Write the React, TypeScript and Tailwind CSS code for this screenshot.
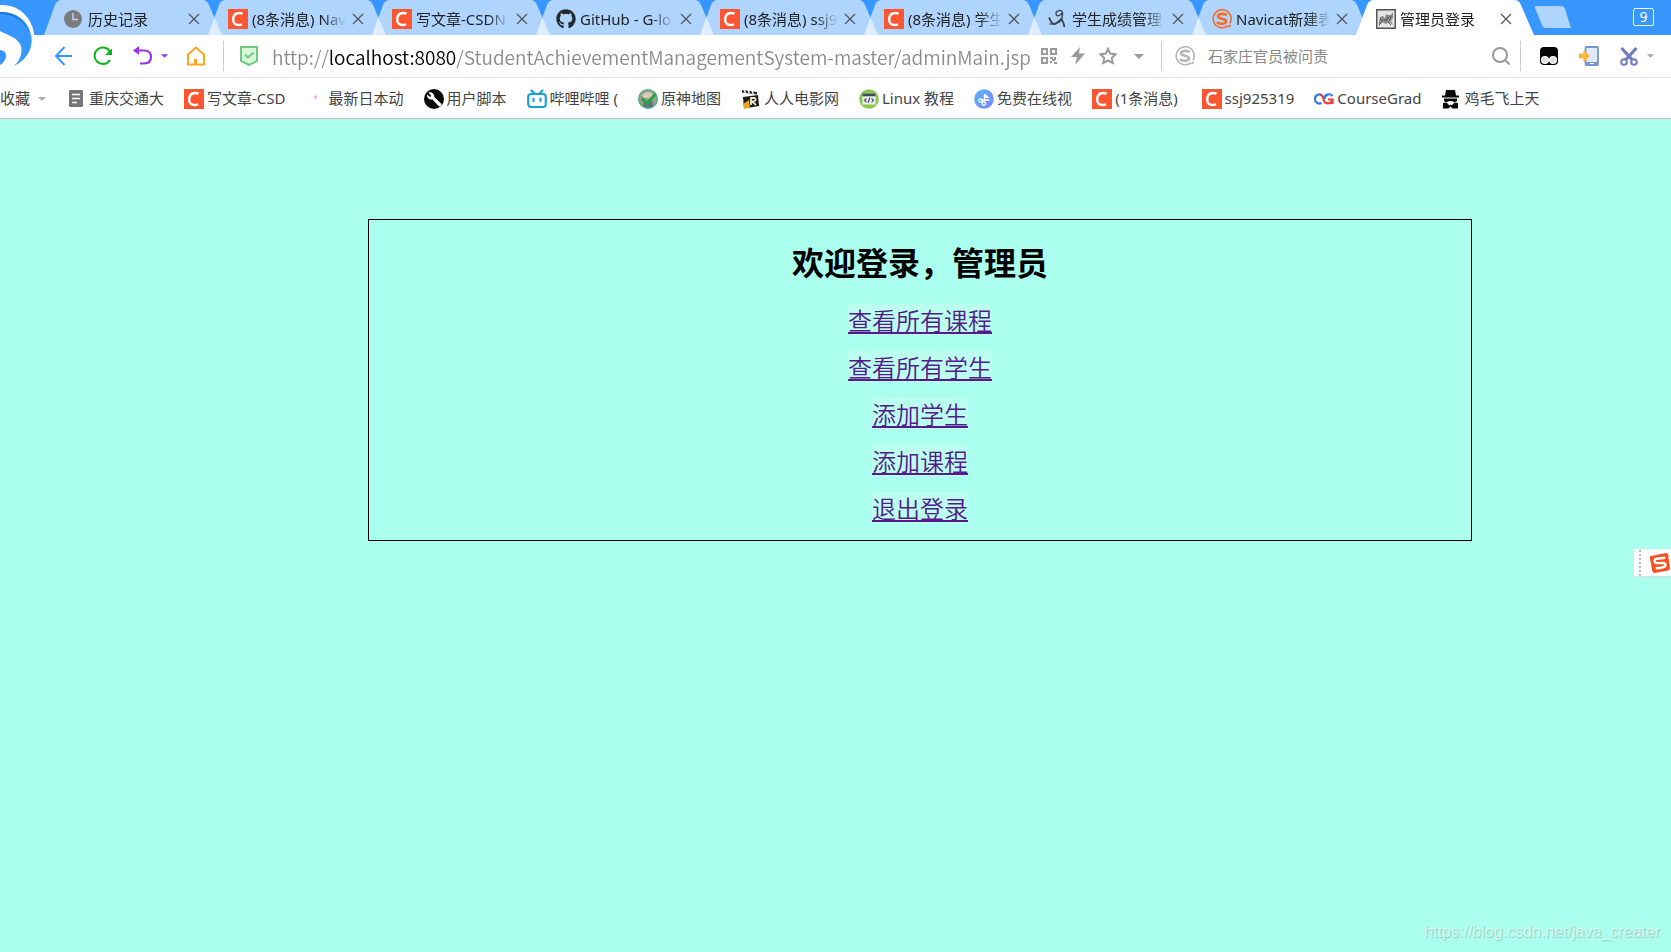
import type { ReactNode } from 'react';
import { FaGithub } from 'react-icons/fa';

const Csdn = () => (
    <svg viewBox="0 0 20 20" className="size-5 shrink-0">
        <rect width="20" height="20" fill="#fc5531" />
        <path d="M14.6 4.8 Q12.9 3.9 10.9 4 C7.4 4.2 5.3 6.8 5.2 10.3 C5.1 14 7.1 16 10.4 16 Q12.4 16 14 15.2" fill="none" stroke="#fff" strokeWidth="2.4" />
    </svg>
);

const Clock = () => (
    <svg viewBox="0 0 20 20" className="size-5 shrink-0">
        <circle cx="9" cy="10" r="9" fill="#7c7c7c" />
        <path d="M9 4 V10.5 H14" fill="none" stroke="#bbdaff" strokeWidth="1.4" />
    </svg>
);

const Github = () => <FaGithub className="size-5 shrink-0 text-[#24292e]" />;

const Scribble = () => (
    <svg viewBox="0 0 20 20" className="size-5 shrink-0" fill="none" stroke="#3f4650">
        <path d="M14.5 2.5 C12 .5 7.500 2 8 5 C8.500 8 13 7 14.500 3 C15 7 14 10 11 13.500" strokeWidth="1.4" />
        <path d="M1 8.500 C2.500 11 3.500 14.500 5.500 15 C8 15.500 10.500 13 13.500 10 Q15.500 13 16.500 18" strokeWidth="1.900" />
        <path d="M1.500 15 H7" strokeWidth="1.200" />
    </svg>
);

const SogouRing = ({ color }: { color: string }) => (
    <svg viewBox="0 0 20 20" className="size-5 shrink-0" fill="none" stroke={color} strokeLinecap="round">
        <path d="M15.5 17 A9 9 0 1 1 18.200 13.800" strokeWidth="1.6" />
        <path d="M14 5.600 C11 4.300 6 4.600 6 7.300 C6 10.200 14 9.200 14 12.300 C14 15.200 8.500 15.300 5.500 13.900" strokeWidth="2.600" />
        <path d="M17 17.500 L18 16.500" strokeWidth="1.800" />
    </svg>
);

const Cat = () => (
    <svg viewBox="0 0 20 20" className="size-5 shrink-0">
        <rect x=".75" y=".75" width="18.500" height="18.500" fill="#e4e4e4" stroke="#555" strokeWidth="1.5" />
        <path d="M3 13 L4 8 L7 7 L9 9 L10 5 L12 6 L15 6 L17 3 V9 L15 12 L17 16 L13 13 L10 15 L6 13 L3 17 Z" fill="#8b8b8b" />
        <path d="M4 10 L7 12 M8 11 H12 M11 8 L13 9 M15 7 L14 10 M3 16 L6 13 M12 13 L15 16" stroke="#4c4c4c" />
    </svg>
);

const Doc = () => (
    <svg viewBox="0 0 20 20" className="size-5 shrink-0">
        <rect x="3" y="1" width="14" height="17" rx="1" fill="#777" />
        <path d="M6 5.500 H14 M6 9.500 H14 M6 13.500 H11" stroke="#fff" strokeWidth="1.300" />
    </svg>
);

const PinkDot = () => (
    <svg viewBox="0 0 20 20" className="size-5 shrink-0">
        <path d="M8 7.500 L10.500 6 L11 8.500 L9 11 Z" fill="#f3a6e3" />
    </svg>
);

const Wrench = () => (
    <svg viewBox="0 0 20 20" className="size-5 shrink-0">
        <circle cx="10" cy="10" r="10" fill="#0b0b0b" />
        <path d="M3 5.500 L6.200 8 L7.200 6.800 L4.500 3.500 C7 2.500 10.500 4.500 10.300 8 L17.500 15 Q17.500 17.500 15 17.500 L8.500 10.500 C5.500 11.200 2.700 8.800 3 5.500 Z" fill="#fff" />
    </svg>
);

const Bilibili = () => (
    <svg viewBox="0 0 20 20" className="size-5 shrink-0" fill="none" stroke="#1ba1d9" strokeWidth="2.200" strokeLinecap="round">
        <rect x="1.200" y="5" width="17.600" height="13" rx="3" />
        <path d="M4.500 1.500 L7 4 M15.500 1.500 L13 4 M6.500 9.500 V12 M13.500 9.500 V12" />
    </svg>
);

const GenshinMap = () => (
    <svg viewBox="0 0 20 20" className="size-5 shrink-0">
        <circle cx="10" cy="10" r="9.200" fill="#a39a92" stroke="#4fae7c" strokeWidth="1.600" />
        <path d="M4 6 Q10 0 16 6 L14 9 H6 Z" fill="#d5cabb" />
        <path d="M6 12 H14 L15 17 Q10 20 5 17 Z" fill="#646b84" />
        <path d="M4 9.500 L9 14.500 L17.500 5" fill="none" stroke="#26a63f" strokeWidth="3.200" />
    </svg>
);

const Film = () => (
    <svg viewBox="0 0 20 20" className="size-5 shrink-0">
        <path d="M1 1 L16 3 L16 5.500 L1 3.500 Z" fill="#222" />
        <path d="M3 1 L4.500 4 M7 1.500 L8.500 4.500 M11 2 L12.500 5" stroke="#fff" strokeWidth="1.400" />
        <path d="M2 8 L17 6 L18 17 L3 19.500 Z" fill="#1c1a17" />
        <path d="M2 15 L8 11 L9 18.500 L3 19.500 Z" fill="#eda31b" />
        <path d="M10 16 V9 H13 Q15 9.200 14.500 11 Q14 12.500 11 12.500 L15 16" fill="none" stroke="#f4e9cc" strokeWidth="1.800" />
    </svg>
);

const Linux = () => (
    <svg viewBox="0 0 20 20" className="size-5 shrink-0">
        <circle cx="10" cy="10" r="9.800" fill="#8cc550" />
        <rect x="3.500" y="4.500" width="13" height="11" fill="#eef1f2" />
        <rect x="3.500" y="4.500" width="13" height="2.800" fill="#3d4b5a" />
        <path d="M7.500 9.300 L5.500 11.300 L7.500 13.300 M12.500 9.300 L14.500 11.300 L12.500 13.300 M10.800 8.800 L9.200 13.800" fill="none" stroke="#3d4b5a" strokeWidth="1.200" />
    </svg>
);

const VideoCut = () => (
    <svg viewBox="0 0 20 20" className="size-5 shrink-0" fill="none" stroke="#fff">
        <defs>
            <linearGradient id="cut" x1="0" y1="0" x2="1" y2="1">
                <stop offset="0" stopColor="#57b8fb" />
                <stop offset="1" stopColor="#7b84fb" />
            </linearGradient>
        </defs>
        <circle cx="10" cy="10" r="9.800" fill="url(#cut)" stroke="none" />
        <path d="M11 4.500 L15.500 9 H11 Z" fill="#fff" stroke="none" />
        <circle cx="6.500" cy="11.500" r="1.700" strokeWidth="1.300" />
        <circle cx="9.800" cy="14.500" r="1.700" strokeWidth="1.300" />
        <path d="M10.500 5 V13 M8 11 H15.500" strokeWidth="1.300" />
    </svg>
);

const CourseGrad = () => (
    <svg viewBox="0 0 20 20" className="size-5 shrink-0" fill="none" strokeWidth="2.200">
        <path d="M8 6.300 A4.500 4.500 0 1 0 7.500 14" stroke="#2f78e8" />
        <path d="M6 5.700 A4.500 4.500 0 0 1 9.500 10 Q9.800 14.300 14 14.300" stroke="#e9403b" />
        <path d="M18.500 7 A4.500 4.500 0 0 0 10.500 10" stroke="#2f78e8" />
        <path d="M14 10.500 H18.500 V15 M18 12 Q17 14.300 14 14.300" stroke="#e9403b" />
    </svg>
);

const Spy = () => (
    <svg viewBox="0 0 20 20" className="size-5 shrink-0" fill="#0a0a0a">
        <path d="M5 1 H14 L15 6.500 H18 V8.500 H1 V6.500 H4 Z" />
        <path d="M3 9.500 H16 V12 Q14.500 13.800 10.500 12 H8.500 Q4.500 13.800 3 12 Z" />
        <path d="M2 14 L5.500 13.500 L8.500 16.500 L9.500 15.500 L10.500 16.500 L13.500 13.500 L17 14 V19.500 H11.500 L9.500 17.500 L7.500 19.500 H2 Z" />
    </svg>
);

const Caret = ({ className }: { className: string }) => (
    <svg viewBox="0 0 8 4" className={className} fill="currentColor">
        <path d="M0 0 H8 L4 4 Z" />
    </svg>
);

const Logo = () => (
    <svg viewBox="0 0 36 70" className="pointer-events-none absolute top-0 left-0 z-20 h-[70px] w-9">
        <path d="M0 5 C18 4 33 17 34.500 37 L34 45 L0 69 Z" fill="#fff" />
        <path d="M0 12 C15 11 29 20 31.500 37 C33 50 26 60 14 66 C21 60 23 50 20.500 45 C17 37 5 34 0 31 Z" fill="#3797ff" />
        <path d="M0 12 C12 11 26 20 29 32 C23 20 12 14 0 14 Z" fill="#2278dd" />
        <path d="M0 50 C4 50 6.500 53 6 57 Q5 62 0 65 Z" fill="#3797ff" />
    </svg>
);

type Tab = { id: number; title: string; icon: ReactNode; active?: boolean };

const tabs: Tab[] = [
    { id: 1, title: '历史记录', icon: <Clock /> },
    { id: 2, title: '(8条消息) Nav', icon: <Csdn /> },
    { id: 3, title: '写文章-CSDN', icon: <Csdn /> },
    { id: 4, title: 'GitHub - G-lo', icon: <Github /> },
    { id: 5, title: '(8条消息) ssj9', icon: <Csdn /> },
    { id: 6, title: '(8条消息) 学生', icon: <Csdn /> },
    { id: 7, title: '学生成绩管理', icon: <Scribble /> },
    { id: 8, title: 'Navicat新建表', icon: <SogouRing color="#fb6a22" /> },
    { id: 9, title: '管理员登录', icon: <Cat />, active: true },
];

const bookmarks = [
    { id: 1, title: '重庆交通大', icon: <Doc /> },
    { id: 2, title: '写文章-CSD', icon: <Csdn /> },
    { id: 3, title: '最新日本动', icon: <PinkDot /> },
    { id: 4, title: '用户脚本', icon: <Wrench /> },
    { id: 5, title: '哔哩哔哩 (', icon: <Bilibili /> },
    { id: 6, title: '原神地图', icon: <GenshinMap /> },
    { id: 7, title: '人人电影网', icon: <Film /> },
    { id: 8, title: 'Linux 教程', icon: <Linux /> },
    { id: 9, title: '免费在线视', icon: <VideoCut /> },
    { id: 10, title: '(1条消息) ', icon: <Csdn /> },
    { id: 11, title: 'ssj925319', icon: <Csdn /> },
    { id: 12, title: 'CourseGrad', icon: <CourseGrad /> },
    { id: 13, title: '鸡毛飞上天', icon: <Spy /> },
];

const menu = ['查看所有课程', '查看所有学生', '添加学生', '添加课程', '退出登录'];

function TabBar() {
    return (
        <div className="flex h-[35px] bg-[#3797ff] pl-11">
            {tabs.map((tab) => (
                <div key={tab.id} className="relative -mr-[14px] flex h-[35px] w-[178px] shrink-0 items-center pt-[3px] pr-[22px] pl-5">
                    <svg viewBox="0 0 178 35" className="absolute inset-0 h-full w-full">
                        <path d="M0 35 L11 5 Q13 0 18 0 H158 Q163 0 165 5 L178 35 Z" fill="#fff" fillOpacity={tab.active ? 1 : 0.6} />
                    </svg>
                    <button className="relative flex w-[120px] shrink-0 items-center gap-1 text-[15px] leading-5 whitespace-nowrap text-[#222] [mask-image:linear-gradient(to_right,#000_96px,transparent_118px)]">
                        {tab.icon}
                        {tab.title}
                    </button>
                    <button aria-label="关闭标签" className="relative ml-1 text-[#555]">
                        <svg viewBox="0 0 12 12" className="size-3" stroke="currentColor" strokeWidth="1.300">
                            <path d="M1 1 L11 11 M11 1 L1 11" />
                        </svg>
                    </button>
                </div>
            ))}
            <button aria-label="新建标签" className="ml-[14px] shrink-0 self-start pt-[6px]">
                <svg viewBox="0 0 37 22" className="h-[22px] w-[37px]">
                    <path d="M3 0 H27 Q30 0 31 3 L37 22 H12 Q9 22 8 19 L1 2 Q0 0 3 0 Z" fill="#afd5ff" />
                </svg>
            </button>
            <button className="mt-2 mr-[17px] ml-auto h-[18px] w-[21px] shrink-0 rounded-xs border border-white text-sm leading-4 text-white">9</button>
        </div>
    );
}

function NavBar() {
    return (
        <div className="flex h-[43px] items-center border-b border-[#e3e3e3] bg-white pl-[54px]">
            <button aria-label="后退" className="mr-[19px]">
                <svg viewBox="0 0 20 20" className="size-5" fill="none" stroke="#3797ff" strokeWidth="2">
                    <path d="M10.500 1 L2 10 L10.500 19 M2 10 H18" />
                </svg>
            </button>
            <button aria-label="刷新" className="mr-5">
                <svg viewBox="0 0 20 20" className="size-5" fill="none" stroke="#0bb41c" strokeWidth="2">
                    <path d="M17.500 6.500 A8.300 8.300 0 1 0 17 14" />
                    <path d="M19 2.500 V9 H12 Z" fill="#0bb41c" stroke="none" />
                </svg>
            </button>
            <button aria-label="恢复标签" className="mr-[18px] flex items-center gap-2 text-[#9a32f5]">
                <svg viewBox="0 0 20 20" className="size-5" fill="none" stroke="currentColor" strokeWidth="2.200">
                    <path d="M3 4.500 H11 Q18 4.500 18 11 Q18 17.500 11 17.500 H7" />
                    <path d="M6 0 V9 L0 4.500 Z" fill="currentColor" stroke="none" />
                </svg>
                <Caret className="h-1 w-[7px]" />
            </button>
            <button aria-label="主页">
                <svg viewBox="0 0 20 20" className="size-5" fill="none" stroke="#ffa41c" strokeWidth="2">
                    <path d="M2 8.500 L10 1.500 L18 8.500 V18.500 H2 Z" />
                    <path d="M9.500 18 V13" strokeWidth="3" />
                </svg>
            </button>
            <div className="mr-4 ml-[17px] h-[30px] w-px bg-[#ccc]" />
            <svg viewBox="0 0 18 20" className="h-5 w-[18px] shrink-0" fill="#d8f7da" stroke="#72c981" strokeWidth="2">
                <path d="M1 1 H17 V15 L9 19 L1 15 Z" />
                <path d="M5 8.500 L8 11.500 L13.500 6.500" fill="none" />
            </svg>
            <input
                aria-label="地址"
                defaultValue="http://localhost:8080/StudentAchievementManagementSystem-master/adminMain.jsp"
                className="ml-[14px] h-8 min-w-0 flex-1 bg-[linear-gradient(to_right,#888_56px,#000_56px,#000_184px,#888_184px)] bg-clip-text font-['Noto_Sans_CJK_SC',sans-serif] text-[19px] font-[350] text-transparent outline-none"
            />
            <div className="flex shrink-0 items-center text-[#999]">
                <button aria-label="二维码" className="mr-[14px]">
                    <svg viewBox="0 0 16 16" className="size-4" fill="none" stroke="currentColor" strokeWidth="2">
                        <path d="M1 1 H6 V6 H1 Z M10 1 H15 V6 H10 Z M1 10 H6 V15 H1 Z M9 10 H12 M14 9 V12 M9 14 H11 M11 12 H14 M13 15 H16" />
                    </svg>
                </button>
                <button aria-label="极速模式" className="mr-[14px]">
                    <svg viewBox="0 0 14 20" className="h-5 w-[14px]" fill="currentColor">
                        <path d="M9 1 L0 11 H6 L4 19 L14 7.500 H8 Z" />
                    </svg>
                </button>
                <button aria-label="收藏" className="mr-[17px]">
                    <svg viewBox="0 0 18 18" className="size-[18px]" fill="none" stroke="currentColor" strokeWidth="2">
                        <path d="M9 2 L11.200 6.500 L16.500 7.200 L12.800 10.800 L13.700 16 L9 13.500 L4.300 16 L5.200 10.800 L1.500 7.200 L6.800 6.500 Z" />
                    </svg>
                </button>
                <button aria-label="历史地址">
                    <Caret className="h-[5px] w-[10px]" />
                </button>
            </div>
            <div className="mr-[13px] ml-[17px] h-[30px] w-px bg-[#ccc]" />
            <SogouRing color="#b5b5b5" />
            <input
                aria-label="搜索"
                placeholder="石家庄官员被问责"
                className="ml-[13px] w-[284px] text-[15px] outline-none placeholder:text-[#888]"
            />
            <button aria-label="搜索">
                <svg viewBox="0 0 18 18" className="size-[18px]" fill="none" stroke="#999" strokeWidth="2">
                    <circle cx="8" cy="8" r="7" />
                    <path d="M13 13 L17.500 17.500" />
                </svg>
            </button>
            <div className="mr-[18px] ml-[10px] h-[30px] w-px shrink-0 bg-[#ccc]" />
            <div className="flex shrink-0 items-center gap-5 pr-[17px]">
                <button aria-label="脚本">
                    <svg viewBox="0 0 20 20" className="size-5">
                        <rect x="1" y="1" width="18" height="18" rx="4" fill="#050505" />
                        <circle cx="6" cy="14" r="4" fill="#fff" />
                        <circle cx="14" cy="14" r="4" fill="#fff" />
                        <circle cx="6" cy="14" r="2.800" fill="#ddd" />
                        <circle cx="14" cy="14" r="2.800" fill="#ddd" />
                    </svg>
                </button>
                <button aria-label="发送到手机">
                    <svg viewBox="0 0 20 20" className="size-5">
                        <rect x="6.500" y="1" width="12.500" height="18" rx="1" fill="#dfe9fb" stroke="#7796cd" strokeWidth="1.800" />
                        <path d="M6 16 H19 V19 H6 Z" fill="#7796cd" />
                        <path d="M11 17.500 H15" stroke="#fff" />
                        <path d="M0 7.500 H4.500 V4 L11 10 L4.500 16 V12.500 H0 Z" fill="#f9b637" />
                    </svg>
                </button>
                <button aria-label="截图" className="flex items-center gap-2 text-[#a5a5a5]">
                    <svg viewBox="0 0 20 20" className="size-5" fill="none" stroke="#6f7dc3">
                        <path d="M2.500 2 L13.500 14 M17.500 2 L6.500 14" strokeWidth="3.200" />
                        <circle cx="5" cy="16" r="2.800" strokeWidth="2" />
                        <circle cx="15" cy="16" r="2.800" strokeWidth="2" />
                    </svg>
                    <Caret className="h-1 w-[7px]" />
                </button>
            </div>
        </div>
    );
}

function BookmarkBar() {
    return (
        <nav className="flex h-[41px] items-center gap-5 overflow-hidden border-b border-[#c4c4c4] bg-white pt-px text-[15px] whitespace-pre text-[#444]">
            <button className="flex items-center gap-2">
                收藏
                <Caret className="h-1 w-2 text-[#aaa]" />
            </button>
            {bookmarks.map((item) => (
                <a key={item.id} href="#" className="flex items-center gap-[3px]">
                    {item.icon}
                    {item.title}
                </a>
            ))}
        </nav>
    );
}

export default function App() {
    return (
        <div className="relative flex min-h-screen flex-col overflow-hidden bg-[#aaffee] font-['Noto_Sans','Noto_Sans_CJK_SC',sans-serif]">
            <header className="relative">
                <Logo />
                <TabBar />
                <NavBar />
                <BookmarkBar />
            </header>

            <main className="mt-[100px] ml-[22%] box-content w-[66%] border border-black pt-5 pb-[17px] text-center font-['Noto_Sans_CJK_SC',sans-serif]">
                <h1 className="mb-[21px] text-[32px] leading-[43px] font-bold text-black">欢迎登录，管理员</h1>
                <ul className="flex flex-col items-center gap-4">
                    {menu.map((label) => (
                        <li key={label} className="h-[31px]">
                            <a href="#" className="block bg-[#bbffee] text-2xl leading-[31px] font-[350] text-[#551a8b] underline decoration-2 underline-offset-2">
                                {label}
                            </a>
                        </li>
                    ))}
                </ul>
            </main>

            {/* input method bar docked to the right edge */}
            <div className="absolute top-[549px] right-0 flex h-7 w-[37px] items-center justify-between border-b border-[#ddd] bg-white pr-px pl-[5px]">
                <div className="h-[26px] border-l-2 border-dotted border-[#bbb]" />
                <svg viewBox="0 0 22 22" className="size-[21px]">
                    <path d="M1 4.500 L18 1 Q20 1 20 3 L22 17 Q22 19 20 19.500 L6 22 Q4 22 3.500 20 L1 7 Z" fill="#f4511e" />
                    <path d="M17 6 L8 7 Q5 8 6 10.500 Q7 12 15 11.500 Q18 12 17 14.500 Q16 16.500 7 17" fill="none" stroke="#fff" strokeWidth="2.600" />
                </svg>
            </div>

            <p className="mt-auto mr-[11px] mb-2 text-right font-['Liberation_Sans',sans-serif] text-base text-white/60 [text-shadow:1px_1px_1px_rgb(0_0_0/0.2)]">
                https://blog.csdn.net/java_creater
            </p>
        </div>
    );
}
